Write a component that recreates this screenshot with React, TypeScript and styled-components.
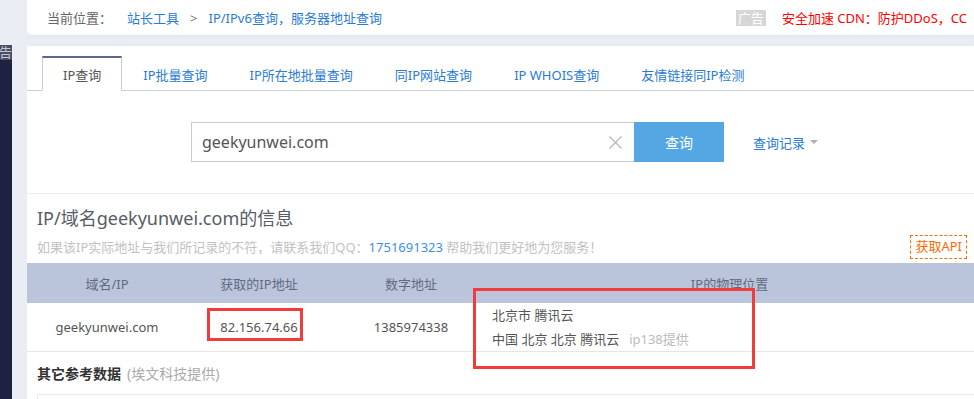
import React from "react";
import styled, { createGlobalStyle } from "styled-components";

const GlobalStyle = createGlobalStyle`
  html, body { margin: 0; padding: 0; }
  body {
    background: #eaeef4;
    font-family: "Noto Sans", "Noto Sans CJK SC", sans-serif;
    overflow: hidden;
    width: 974px;
    height: 399px;
  }
`;

const Page = styled.div`
  display: flex;
  width: 978px;
  height: 399px;
  overflow: hidden;
`;

const Rail = styled.div`
  width: 12px;
  margin-top: 45px;
  display: flex;
  flex-direction: column;
  background: #1e2142;
  flex-shrink: 0;
`;

const RailTag = styled.div`
  height: 15px;
  background: #4a4d66;
  color: #c4c6d2;
  font-size: 13px;
  line-height: 15px;
  overflow: hidden;
  white-space: nowrap;
  display: flex;
  justify-content: flex-end;
`;

const Content = styled.div`
  margin-left: 15px;
  flex: 1;
  display: flex;
  flex-direction: column;
  gap: 11px;
  min-width: 0;
  overflow: hidden;
`;

const Crumbs = styled.div`
  flex-shrink: 0;
  height: 35px;
  background: #fff;
  border-radius: 0 0 0 5px;
  box-shadow: 0 1px 6px rgba(40, 60, 100, 0.05);
  display: flex;
  align-items: center;
  padding: 0 11px 0 20px;
  font-size: 13px;
  color: #666;
`;

const CrumbLink = styled.span<{ $ml?: number }>`
  color: #2a7bd4;
  margin-left: ${(p) => p.$ml ?? 0}px;
`;

const CrumbSep = styled.span`
  color: #777;
  margin: 0 11px;
`;

const AdGroup = styled.div`
  margin-left: auto;
  display: flex;
  align-items: center;
  gap: 16px;
`;

const AdBadge = styled.span`
  background: #d6d6d6;
  color: #fff;
  font-size: 13px;
  line-height: 16px;
  padding: 0 2px;
`;

const AdText = styled.span`
  color: #ff0000;
  font-size: 13px;
`;

const Card = styled.div`
  flex-shrink: 0;
  background: #fff;
  box-shadow: 0 1px 6px rgba(40, 60, 100, 0.06);
  display: flex;
  flex-direction: column;
  padding-top: 10px;
`;

const TabBar = styled.div`
  display: flex;
  padding-left: 15px;
  border-bottom: 1px solid #c8cfdb;
  height: 35px;
  box-sizing: border-box;
`;

const Tab = styled.div<{ $active?: boolean }>`
  padding: 0 20px;
  height: 35px;
  box-sizing: border-box;
  display: flex;
  align-items: center;
  font-size: 13px;
  border: 1px solid transparent;
  border-top: 2px solid transparent;
  color: #2a7bd4;
  ${(p) =>
    p.$active &&
    `
    color: #555;
    background: #fff;
    border-color: #c5cdda;
    border-top-color: #5b6a86;
    border-bottom-color: #fff;
  `}
`;

const SearchRow = styled.div`
  display: flex;
  align-items: center;
  padding: 31px 0 31px 164px;
  border-bottom: 1px solid #ececec;
`;

const InputBox = styled.div`
  width: 443px;
  height: 40px;
  box-sizing: border-box;
  border: 1px solid #c5ccd8;
  border-right: none;
  display: flex;
  align-items: center;
  padding: 0 12px 0 10px;
  font-size: 16px;
  color: #555;
`;

const InputText = styled.span`
  flex: 1;
`;

const SearchButton = styled.div`
  width: 90px;
  height: 40px;
  background: #55a7e4;
  color: #fff;
  font-size: 14px;
  display: flex;
  align-items: center;
  justify-content: center;
`;

const History = styled.div`
  margin-left: 29px;
  color: #2a7bd4;
  font-size: 13px;
  display: flex;
  align-items: center;
  gap: 5px;
`;

const Caret = styled.span`
  width: 0;
  height: 0;
  border-left: 4px solid transparent;
  border-right: 4px solid transparent;
  border-top: 4px solid #b0b0b0;
`;

const InfoHead = styled.div`
  padding: 12px 11px 4px 10px;
  display: flex;
  flex-direction: column;
`;

const Title = styled.div`
  font-size: 18px;
  line-height: 24px;
  color: #575c66;
`;

const SubRow = styled.div`
  display: flex;
  align-items: center;
  justify-content: space-between;
  margin-top: 5px;
`;

const SubText = styled.div`
  font-size: 13px;
  color: #c2c2c2;
  line-height: 20px;
`;

const QQ = styled.span`
  color: #3b8fe8;
`;

const ApiButton = styled.div`
  border: 1px dashed #ff6a00;
  color: #ff6a00;
  font-size: 13px;
  padding: 0 4px;
  height: 22px;
  line-height: 21px;
`;

const Grid = styled.div`
  display: grid;
  grid-template-columns: 160px 144px 160px 1fr;
`;

const HeadRow = styled(Grid)`
  background: #bac5dc;
  height: 40px;
`;

const HeadCell = styled.div<{ $shift?: number }>`
  display: flex;
  align-items: center;
  justify-content: center;
  font-size: 13px;
  color: #626b7e;
  padding-right: ${(p) => p.$shift ?? 0}px;
`;

const BodyRow = styled(Grid)`
  border-bottom: 1px solid #e6e6e6;
  height: 49px;
  box-sizing: border-box;
`;

const Cell = styled.div`
  position: relative;
  display: flex;
  align-items: center;
  justify-content: center;
  font-size: 13px;
  color: #555;
`;

const LocCell = styled.div`
  position: relative;
  font-size: 13px;
  line-height: 24px;
  color: #555;
  padding-left: 1px;
`;

const Muted = styled.span`
  color: #bbb;
  margin-left: 10px;
`;

const Mark = styled.div<{ $l: number; $t: number; $w: number; $h: number }>`
  position: absolute;
  left: ${(p) => p.$l}px;
  top: ${(p) => p.$t}px;
  width: ${(p) => p.$w}px;
  height: ${(p) => p.$h}px;
  box-sizing: border-box;
  border: 3px solid #f23c3c;
  pointer-events: none;
`;

const Other = styled.div`
  padding: 12px 0 0 10px;
  display: flex;
  flex-direction: column;
  gap: 10px;
`;

const OtherTitle = styled.div`
  font-size: 14px;
  line-height: 20px;
  font-weight: 700;
  color: #333;
`;

const OtherNote = styled.span`
  font-weight: 400;
  color: #aaa;
  margin-left: 6px;
`;

const OtherBox = styled.div`
  height: 40px;
  border: 1px solid #e8e8e8;
`;

const ClearIcon = () => (
  <svg width="13" height="13" viewBox="0 0 13 13">
    <path d="M0.5 0.5 L12.5 12.5 M12.5 0.5 L0.5 12.5" stroke="#b3b3b3" strokeWidth="1.1" fill="none" />
  </svg>
);

const tabs = ["IP查询", "IP批量查询", "IP所在地批量查询", "同IP网站查询", "IP WHOIS查询", "友情链接同IP检测"];

export default function App() {
  return (
    <>
      <GlobalStyle />
      <Page>
        <Rail>
          <RailTag>广告</RailTag>
        </Rail>
        <Content>
          <Crumbs>
            <span>当前位置：</span>
            <CrumbLink $ml={15}>站长工具</CrumbLink>
            <CrumbSep>&gt;</CrumbSep>
            <CrumbLink>IP/IPv6查询，服务器地址查询</CrumbLink>
            <AdGroup>
              <AdBadge>广告</AdBadge>
              <AdText>安全加速 CDN：防护DDoS，CC</AdText>
            </AdGroup>
          </Crumbs>
          <Card>
            <TabBar>
              {tabs.map((t, i) => (
                <Tab key={t} $active={i === 0}>
                  {t}
                </Tab>
              ))}
            </TabBar>
            <SearchRow>
              <InputBox>
                <InputText>geekyunwei.com</InputText>
                <ClearIcon />
              </InputBox>
              <SearchButton>查询</SearchButton>
              <History>
                查询记录
                <Caret />
              </History>
            </SearchRow>
            <InfoHead>
              <Title>IP/域名geekyunwei.com的信息</Title>
              <SubRow>
                <SubText>
                  如果该IP实际地址与我们所记录的不符，请联系我们QQ：<QQ>1751691323</QQ> 帮助我们更好地为您服务！
                </SubText>
                <ApiButton>获取API</ApiButton>
              </SubRow>
            </InfoHead>
            <HeadRow>
              <HeadCell>域名/IP</HeadCell>
              <HeadCell>获取的IP地址</HeadCell>
              <HeadCell>数字地址</HeadCell>
              <HeadCell $shift={10}>IP的物理位置</HeadCell>
            </HeadRow>
            <BodyRow>
              <Cell>geekyunwei.com</Cell>
              <Cell>
                82.156.74.66
                <Mark $l={20} $t={5} $w={96} $h={33} />
              </Cell>
              <Cell>1385974338</Cell>
              <LocCell>
                <div>北京市 腾讯云</div>
                <div>
                  中国 北京 北京 腾讯云<Muted>ip138提供</Muted>
                </div>
                <Mark $l={-18} $t={-15} $w={282} $h={81} />
              </LocCell>
            </BodyRow>
            <Other>
              <OtherTitle>
                其它参考数据<OtherNote>(埃文科技提供)</OtherNote>
              </OtherTitle>
              <OtherBox />
            </Other>
          </Card>
        </Content>
      </Page>
    </>
  );
}
